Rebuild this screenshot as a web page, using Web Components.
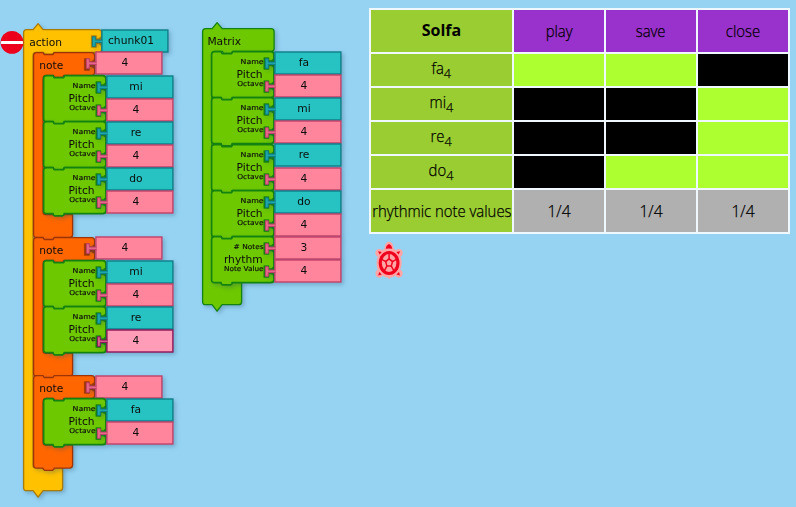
<!DOCTYPE html>
<html lang="en">
<head>
<meta charset="utf-8">
<title>Matrix</title>
<style>
html,body{margin:0;height:100%;overflow:hidden;background:#96d3f3}
</style>
</head>
<body>
<music-workspace></music-workspace>
<script>
const blockCss = `
:host{position:absolute;display:block;width:0;height:0}
svg{position:absolute;left:0;top:0;width:1px;height:1px;overflow:visible;filter:drop-shadow(2px 2px 2px rgba(40,80,110,.32))}
text{font-family:"DejaVu Sans",sans-serif;font-size:10.7px;fill:#0c0c0c}
.small{font-size:6.8px;stroke:#0c0c0c;stroke-width:.15px}`;

class BlockBase extends HTMLElement {
  connectedCallback() {
    const root = this.attachShadow({mode:'open'});
    this.style.left = this.getAttribute('x') + 'px';
    this.style.top = this.getAttribute('y') + 'px';
    root.innerHTML = `<style>${blockCss}</style><svg><g transform="translate(-.4 -.3)">${this.draw()}</g></svg>`;
  }
  num(n) { return parseFloat(this.getAttribute(n)); }
}

const palette = {
  gold:['#ffc100','#a87a08'], orange:['#ff6600','#9c3408'], green:['#6dc800','#148210'],
  teal:['#27c3c2','#0e7f88','#1ea6ab'], pink:['#ff859c','#c2406a','#e5688a'], active:['#ff9db8','#8e1458','#d8608e']
};
const socket = (x, y, c) =>
  `<path d="M${x} ${y+6.5}L${x-3} ${y+9}H${x-5.3}V${y+6}H${x-10.2}V${y+17.6}H${x-5.3}V${y+14}H${x-3}L${x} ${y+16}Z" fill="${c}" stroke="${c}" stroke-width=".7"/>`;

class ClampBlock extends BlockBase {
  draw() {
    const [fill, line] = palette[this.getAttribute('color')];
    const w = this.num('w'), h = this.num('h'), cap = this.hasAttribute('cap');
    const top = cap ? 'M3 0H9.5L14.5-6L19.5 0' : 'M3 0H9.5L10.5 1.8H19.5L20.5 0';
    const bottom = cap
      ? `H19.5L14.5 ${h+6.5}L9.5 ${h}`
      : `H20.5V${h+1}L19 ${h+2.2}H11L9.5 ${h+1}V${h}`;
    const d = `${top}H${w-3}Q${w} 0 ${w} 3V19.8Q${w} 22.8 ${w-3} 22.8H30L29 24.8H21L20 22.8H12.5Q9.5 22.8 9.5 25.8V${h-25}Q9.5 ${h-23} 12 ${h-23}H39V${h-3}Q39 ${h} 36 ${h}${bottom}H3Q0 ${h} 0 ${h-3}V3Q0 0 3 0Z`;
    return `<path d="${d}" fill="${fill}" stroke="${line}" stroke-width="1.3" stroke-linejoin="round"/>`
      + (this.hasAttribute('plug') ? socket(w, 0, line) : '')
      + `<text x="${this.getAttribute('tx') || 5.6}" y="${this.getAttribute('ty') || 16.6}">${this.getAttribute('label')}</text>`;
  }
}
class PitchBlock extends BlockBase {
  draw() {
    const [fill, line] = palette.green;
    const d = 'M3 0H9.5L10.5 2H20L21 0H59Q62.3 0 62.3 3V43Q62.3 46 59 46H20.5V47L19 48.2H11L9.5 47V46H3Q0 46 0 43V3Q0 0 3 0Z';
    const t = (this.getAttribute('labels') || 'Name,Pitch,Octave').split(',');
    const len = {Name:23, Octave:26.4, '# Notes':30, 'Note Value':39.6};
    const small = (s, y) => `<text class="small" x="52" y="${y}" text-anchor="end" textLength="${len[s]}" lengthAdjust="spacingAndGlyphs">${s}</text>`;
    return `<path d="${d}" fill="${fill}" stroke="${line}" stroke-width="1.7" stroke-linejoin="round"/>`
      + socket(62.5, 0, line) + socket(62.5, 23.1, line)
      + small(t[0], 12)
      + `<text x="51" y="26.6" text-anchor="end">${t[1]}</text>`
      + small(t[2], 34.7);
  }
}
class ValueBlock extends BlockBase {
  draw() {
    const [fill, line, plug] = palette[this.getAttribute('color')];
    return `<rect x=".3" y=".3" width="66" height="22" fill="${fill}" stroke="${line}" stroke-width="1.4"/>`
      + `<path d="M.9 10.4H-6.3V7.1H-9.2V16.6H-6.3V12.8H.9" fill="${plug}" stroke="${line}" stroke-width="1"/>`
      + `<text x="29.4" y="14.8" text-anchor="middle">${this.getAttribute('label')}</text>`;
  }
}
customElements.define('clamp-block', ClampBlock);
customElements.define('pitch-block', PitchBlock);
customElements.define('value-block', ValueBlock);

customElements.define('stop-sign', class extends HTMLElement {
  constructor() {
    super();
    this.attachShadow({mode:'open'}).innerHTML = `<style>:host{position:absolute;left:0;top:30px;width:24px;height:25px}</style>
    <svg width="24" height="25"><circle cx="12" cy="12.4" r="11.4" fill="#ec001c"/><rect x="1" y="11" width="22" height="3" rx=".4" fill="#fff"/></svg>`;
  }
});
customElements.define('turtle-sprite', class extends HTMLElement {
  constructor() {
    super();
    this.attachShadow({mode:'open'}).innerHTML = `<style>:host{position:absolute;left:374px;top:241px;width:30px;height:39px}</style>
    <svg width="30" height="39">
      <path fill="#ffa5a5" d="M15 .8C17.4.8 19.5 3.2 19.7 7.5C20.6 8.2 21.4 9 22.2 9.6C23 7 28.8 7.8 28.7 11.5C28.8 14.3 27.6 15.2 26.4 15.8C28.2 19.7 28 25.2 26.2 28.6C28.4 29.6 29.2 32 28.2 34.5C26.7 37.4 22.8 37.4 21.6 34.4C19.9 35.6 17.9 36.4 16.5 36.6L15.2 38.2L13.8 36.6C12 36.4 10 35.6 8.5 34.4C7.2 37.4 3.2 37.4 1.9 34.5C.9 32 1.7 29.6 3.8 28.6C2.2 25.2 2.1 19.7 3.8 15.8C2.2 14.8 1.3 14 1.4 11.5C1.6 7.6 7 7.2 8 9.6C8.7 9 9.5 8.2 10.5 7.5C10.6 3.2 12.6.8 15 .8Z"/>
      <g fill="#f0001c"><path d="M15 2.9C16.8 3.8 18 5.2 18.3 7.8Q15 7.2 11.7 7.8C12 5.2 13.2 3.8 15 2.9Z"/><path d="M4 10.2L7.8 10.9L5.6 13.5ZM26.2 10.2L22.4 10.9L24.6 13.5ZM4.2 34.5L5.2 31L7.8 33.5ZM26 34.5L25 31L22.4 33.5Z"/><ellipse cx="15.1" cy="22" rx="10.4" ry="12.1"/></g>
      <ellipse cx="15.1" cy="22" rx="7.3" ry="9" fill="#ffa5a5"/>
      <path d="M15.1 17.8L18.5 20.6L17.3 25.1H12.9L11.7 20.6ZM15.1 17.8V12.7M18.5 20.6L22.4 18.4M17.3 25.1L19.8 29.6M12.9 25.1L10.4 29.6M11.7 20.6L7.8 18.4" fill="none" stroke="#f0001c" stroke-width="1.5"/>
    </svg>`;
  }
});

customElements.define('matrix-cell', class extends HTMLElement {
  constructor() {
    super();
    this.attachShadow({mode:'open'}).innerHTML = `<style>
    :host{display:flex;align-items:center;justify-content:center;font:300 15.6px/20px "Open Sans",sans-serif;color:#000;white-space:nowrap;background:#9acd32}
    :host([tone=bar]){background:#9932cc}:host([tone=on]){background:#000}:host([tone=off]){background:#adff2f}:host([tone=count]){background:#b0b0b0}
    :host([strong]){font-weight:700;font-size:16px}
    span{display:block;transform:translateY(-.5px) scaleX(.955);-webkit-text-stroke:.25px #000}
    :host([strong]) span{-webkit-text-stroke:0;transform:translateY(-1px)}
    :host([tone=count]) span{transform:none}
    :host([note]) span{padding-bottom:4px}
    ::slotted(sub){font-size:13.3px;line-height:0}
    </style><span><slot></slot></span>`;
  }
});
customElements.define('solfa-matrix', class extends HTMLElement {
  constructor() {
    super();
    const cell = (t, tone='', extra='') => `<matrix-cell tone="${tone}" ${extra}>${t}</matrix-cell>`;
    const rows = [['fa','off','off','on'],['mi','on','on','off'],['re','on','on','off'],['do','on','off','off']];
    this.attachShadow({mode:'open'}).innerHTML = `<style>
    :host{display:grid;box-sizing:border-box;width:421px;height:226px;margin:8px 0 0 369px;padding:2px;gap:2px;background:#f0f8ff;grid-template-columns:141px repeat(3,90px);grid-template-rows:42px repeat(4,32px) 42px}
    </style>` + cell('Solfa','','strong') + ['play','save','close'].map(t=>cell(t,'bar')).join('')
      + rows.map(([n,...v])=>cell(`${n}<sub>4</sub>`,'','note')+v.map(t=>cell('',t)).join('')).join('')
      + cell('rhythmic note values') + cell('1/4','count').repeat(3);
  }
});

customElements.define('music-workspace', class extends HTMLElement {
  constructor() {
    super();
    const value = (x,y,t,c) => `<value-block x="${x}" y="${y}" label="${t}" color="${c}"></value-block>`;
    const pitch = (x,y,n,c='pink') => `<pitch-block x="${x}" y="${y}"></pitch-block>`
      + value(x+62.8,y-.2,n,'teal') + value(x+62.8,y+23,'4',c);
    const note = (y,names,active=-1) => {
      const h = 46.2 + names.length*46.2;
      return `<clamp-block x="34" y="${y}" w="61" h="${h}" color="orange" label="note" plug></clamp-block>`
        + value(95.5,y-.2,'4','pink')
        + names.map((n,i)=>pitch(43.9, y+23.3+i*46.2, n, i===active?'active':'pink')).join('');
    };
    this.attachShadow({mode:'open'}).innerHTML = `<style>:host{display:block;position:relative;width:796px;height:507px;overflow:hidden;background:#96d3f3}</style>
    <solfa-matrix></solfa-matrix>
    <clamp-block x="24.4" y="29.7" w="78" h="461" color="gold" label="action" plug cap></clamp-block>`
    + value(102.2,29.7,'chunk01','teal')
    + note(52.6,['mi','re','do']) + note(237.6,['mi','re'],1) + note(376.1,['fa'])
    + `<clamp-block x="202.8" y="29" w="71.5" h="276" color="green" label="Matrix" tx="4.8" ty="16.6" cap></clamp-block>`
    + ['fa','mi','re','do'].map((n,i)=>pitch(212.3,52.2+i*46.2,n)).join('')
    + `<pitch-block x="212.3" y="237" labels="# Notes,rhythm,Note Value"></pitch-block>`
    + value(275.1,236.8,'3','pink') + value(275.1,259.8,'4','pink')
    + `<stop-sign></stop-sign><turtle-sprite></turtle-sprite>`;
  }
});
</script>
</body>
</html>
